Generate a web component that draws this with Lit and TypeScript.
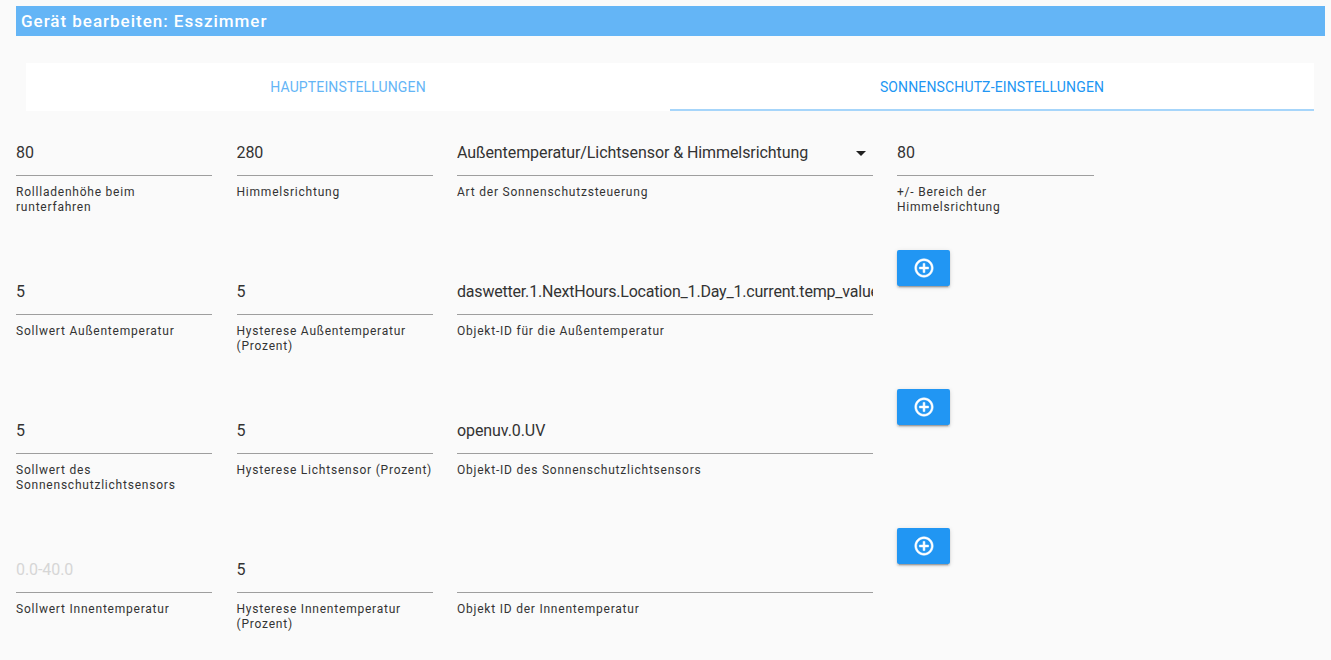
import { LitElement, html, css } from "lit";
import { customElement } from "lit/decorators.js";

type F = { v: string; l: string; ph?: boolean; sel?: boolean; tight?: boolean };

const rows: { f: F[]; btn: boolean }[] = [
  { f: [
    { v: "80", l: "Rollladenhöhe beim\nrunterfahren" },
    { v: "280", l: "Himmelsrichtung" },
    { v: "Außentemperatur/Lichtsensor & Himmelsrichtung", l: "Art der Sonnenschutzsteuerung", sel: true },
    { v: "80", l: "+/- Bereich der\nHimmelsrichtung" },
  ], btn: false },
  { f: [
    { v: "5", l: "Sollwert Außentemperatur" },
    { v: "5", l: "Hysterese Außentemperatur\n(Prozent)" },
    { v: "daswetter.1.NextHours.Location_1.Day_1.current.temp_value", l: "Objekt-ID für die Außentemperatur", tight: true },
  ], btn: true },
  { f: [
    { v: "5", l: "Sollwert des\nSonnenschutzlichtsensors" },
    { v: "5", l: "Hysterese Lichtsensor (Prozent)" },
    { v: "openuv.0.UV", l: "Objekt-ID des Sonnenschutzlichtsensors" },
  ], btn: true },
  { f: [
    { v: "0.0-40.0", l: "Sollwert Innentemperatur", ph: true },
    { v: "5", l: "Hysterese Innentemperatur\n(Prozent)" },
    { v: "", l: "Objekt ID der Innentemperatur" },
  ], btn: true },
];

@customElement("app-root")
export class AppRoot extends LitElement {
  static styles = css`
    :host { display: block; height: 660px; overflow: hidden; background: #fafafa; font-family: Roboto, "Open Sans", sans-serif; color: #333; }
    .page { padding: 6px 6px 0 16px; }
    .title { height: 30px; line-height: 30px; background: #64b5f6; color: #fff; font-size: 17px; font-weight: 500; letter-spacing: 0.98px; padding-left: 5px; }
    .tabs { display: flex; height: 48px; margin: 27px 11px 0 10px; background: #fff; }
    .tab { flex: 1; box-sizing: border-box; display: flex; align-items: center; justify-content: center; font-size: 14px; color: #64b5f6; letter-spacing: 0.14px; }
    .tab.on { color: #2196f3; border-bottom: 2px solid #a6d5fa; padding-top: 2px; }
    .grid { display: grid; grid-template-columns: 196px 196px 415.5px 197px; column-gap: 24.5px; grid-auto-rows: 139px; }
    .field { padding-top: 32px; min-width: 0; }
    .value { position: relative; height: 33px; box-sizing: border-box; border-bottom: 1px solid #9e9e9e; font-size: 16px; line-height: 20px; letter-spacing: -0.08px; white-space: nowrap; overflow: hidden; }
    .value.tight { letter-spacing: -0.2px; }
    .value.ph { color: #d6d6d6; }
    .caret { position: absolute; right: 7px; top: 8px; width: 0; height: 0; border-left: 5px solid transparent; border-right: 5px solid transparent; border-top: 5px solid #212121; }
    .label { margin-top: 9px; font-size: 12px; line-height: 15px; letter-spacing: 0.78px; color: #333; white-space: pre-line; }
    .btn { width: 53px; height: 36px; background: #2196f3; border: 0; padding: 0; border-radius: 2px; display: flex; align-items: center; justify-content: center; box-shadow: 0 2px 2px rgba(0,0,0,.14), 0 3px 1px -2px rgba(0,0,0,.2), 0 1px 5px rgba(0,0,0,.12); }
    .btn svg { width: 22px; height: 22px; fill: #fff; stroke: #fff; stroke-width: 0.6; }
  `;

  render() {
    return html`<div class="page">
      <div class="title">Gerät bearbeiten: Esszimmer</div>
      <div class="tabs">
        <div class="tab">HAUPTEINSTELLUNGEN</div>
        <div class="tab on">SONNENSCHUTZ-EINSTELLUNGEN</div>
      </div>
      <div class="grid">
        ${rows.map((r) => html`
          ${r.f.map((f) => html`<div class="field">
            <div class="value ${f.ph ? "ph" : ""} ${f.tight ? "tight" : ""}">${f.v}${f.sel ? html`<span class="caret"></span>` : ""}</div>
            <div class="label">${f.l}</div>
          </div>`)}
          ${r.btn ? html`<div><button class="btn"><svg viewBox="0 0 24 24"><path d="M13 7h-2v4H7v2h4v4h2v-4h4v-2h-4V7zm-1-5C6.48 2 2 6.48 2 12s4.48 10 10 10 10-4.48 10-10S17.52 2 12 2zm0 18c-4.41 0-8-3.59-8-8s3.59-8 8-8 8 3.59 8 8-3.59 8-8 8z"/></svg></button></div>` : ""}
        `)}
      </div>
    </div>`;
  }
}
